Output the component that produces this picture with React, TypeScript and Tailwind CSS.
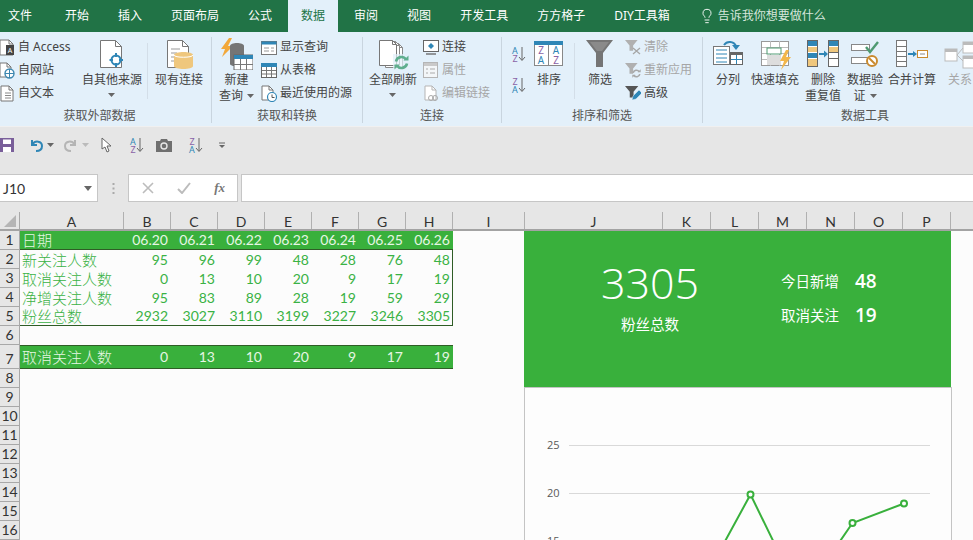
import React from "react";
import { Lightbulb } from "lucide-react";

const Page = ({ x = 1, y = 1, w = 15, h = 18, f = 5, s = "#777" }: any) => (
  <>
    <path d={`M${x} ${y}h${w - f}l${f} ${f}v${h - f}h-${w}z`} fill="#fff" stroke={s} />
    <path d={`M${x + w - f} ${y}v${f}h${f}`} fill="none" stroke={s} />
  </>
);
const Ico = ({ w = 32, h = 32, children, className = "" }: any) => (
  <svg width={w} height={h} viewBox={`0 0 ${w} ${h}`} className={"shrink-0 " + className}>{children}</svg>
);
const Tx = ({ x, y, c, s = 9, children }: any) => (
  <text x={x} y={y} fill={c} fontSize={s} fontFamily="Noto Sans" textAnchor="middle">{children}</text>
);
const Caret = ({ c = "#666" }: any) => (
  <svg width="7" height="4" viewBox="0 0 7 4" className="inline-block"><path d="M0 0h7L3.5 4z" fill={c} /></svg>
);
const Funnel = ({ c, x = 0, y = 0, k = 1 }: any) => (
  <path transform={`translate(${x} ${y}) scale(${k})`} d="M0 0h14L9 6v6H5V6z" fill={c} />
);

const Big = ({ icon, lines, caret, className = "", gray }: any) => (
  <div className={"flex flex-col items-center pt-[1px] whitespace-nowrap " + className}>
    <div className="flex h-[34px] items-start justify-center">{icon}</div>
    <div className={"flex flex-col items-center leading-[16px] " + (gray ? "text-[#a6a6a6]" : "text-[#444444]")}>
      {lines.map((l: string, i: number) => (
        <div key={i} className="flex items-center gap-[4px]">
          {l}
          {caret === "inline" && i === lines.length - 1 && <Caret />}
        </div>
      ))}
      {caret === "below" && <div className="flex h-[13px] items-center"><Caret /></div>}
    </div>
  </div>
);
const Small = ({ icon, label, gray }: any) => (
  <div className={"flex h-[20px] items-center gap-[3px] whitespace-nowrap " + (gray ? "text-[#a6a6a6]" : "text-[#444444]")}>
    <div className="flex w-[16px] justify-center">{icon}</div>
    <span>{label}</span>
  </div>
);
const Group = ({ label, className, labelClass = "", children }: any) => (
  <div className={"flex h-[86px] shrink-0 flex-col border-r border-[#c9d5df] " + className}>
    <div className="flex h-[70px] shrink-0 items-start">{children}</div>
    <div className={"flex h-[18px] shrink-0 items-center justify-center whitespace-nowrap leading-[16px] text-[#555555] " + labelClass}>{label}</div>
  </div>
);
const Sep = ({ className = "" }: any) => <div className={"h-[56px] w-px shrink-0 bg-[#d3dee8] " + className} />;

const SortAZ = () => (
  <Ico w={16} h={16}>
    <Tx x={5} y={7.5} c="#2f86b6">A</Tx><Tx x={5} y={15.5} c="#8a63a6">Z</Tx>
    <path d="M12 1v13M9 11l3 3.5 3-3.5" fill="none" stroke="#666" />
  </Ico>
);
const SortZA = () => (
  <Ico w={16} h={16}>
    <Tx x={5} y={7.5} c="#8a63a6">Z</Tx><Tx x={5} y={15.5} c="#2f86b6">A</Tx>
    <path d="M12 1v13M9 11l3 3.5 3-3.5" fill="none" stroke="#666" />
  </Ico>
);

const RefreshMark = ({ x, y, c = "#5fae8e", k = 1 }: any) => (
  <g transform={`translate(${x} ${y}) scale(${k})`} fill="none" stroke={c} strokeWidth="2.6">
    <path d="M2 6.5A5.5 5.5 0 0 1 12 4.5" />
    <path d="M13 8.5A5.5 5.5 0 0 1 3 10.5" />
    <path d="M9.5 5.5h5v-5z" fill={c} stroke="none" />
    <path d="M5.5 9.5h-5v5z" fill={c} stroke="none" />
  </g>
);

const tabs = ["开始", "插入", "页面布局", "公式"];
const tabs2 = ["审阅", "视图", "开发工具", "方方格子", "DIY工具箱"];

const cols: [string, string][] = [
  ["A", "w-[104px]"], ["B", "w-[47px]"], ["C", "w-[47px]"], ["D", "w-[47px]"], ["E", "w-[47px]"], ["F", "w-[47px]"], ["G", "w-[47px]"], ["H", "w-[47px]"], ["I", "w-[72px]"],
  ["J", "w-[138px]"], ["K", "w-[48px]"], ["L", "w-[48px]"], ["M", "w-[48px]"], ["N", "w-[48px]"], ["O", "w-[48px]"], ["P", "w-[48px]"], ["", "w-[40px]"],
];

const rows: { n: number; label?: string; vals?: (string | number)[]; kind?: string }[] = [
  { n: 1, label: "日期", vals: ["06.20", "06.21", "06.22", "06.23", "06.24", "06.25", "06.26"], kind: "head" },
  { n: 2, label: "新关注人数", vals: [95, 96, 99, 48, 28, 76, 48], kind: "body" },
  { n: 3, label: "取消关注人数", vals: [0, 13, 10, 20, 9, 17, 19], kind: "body" },
  { n: 4, label: "净增关注人数", vals: [95, 83, 89, 28, 19, 59, 29], kind: "body" },
  { n: 5, label: "粉丝总数", vals: [2932, 3027, 3110, 3199, 3227, 3246, 3305], kind: "last" },
  { n: 6 },
  { n: 7, label: "取消关注人数", vals: [0, 13, 10, 20, 9, 17, 19], kind: "band" },
  ...[8, 9, 10, 11, 12, 13, 14, 15, 16].map((n) => ({ n })),
];

const rowClass = (k?: string) => {
  if (k === "head") return "h-[19px] bg-[#39b03c] text-[#e6f6e4] border-b border-[#2f5d26]";
  if (k === "band") return "h-[24px] bg-[#39b03c] text-[#e6f6e4] border-y border-[#2f5d26]";
  if (k === "last") return "h-[19px] text-[#3ab244] border-b border-[#2f5d26]";
  if (k === "body") return "h-[19px] text-[#3ab244]";
  return "h-[19px]";
};

export default function App() {
  return (
    <div className="h-[540px] w-[973px] overflow-hidden bg-[#e6e6e6] font-['Noto_Sans','Noto_Sans_CJK_SC',sans-serif] text-[12px]">
      {/* Tabs */}
      <div className="flex h-[32px] items-center gap-[29px] whitespace-nowrap bg-[#217346] pl-[8px] text-white">
        <span className="mr-[4px]">文件</span>
        {tabs.map((t) => <span key={t}>{t}</span>)}
        <span className="-mx-[13px] flex h-[32px] items-center bg-[#e3f0fa] px-[13px] text-[#217346]">数据</span>
        {tabs2.map((t) => <span key={t}>{t}</span>)}
        <span className="flex items-center gap-[3px] text-[#d6e6dc]">
          <Lightbulb size={16} strokeWidth={1.4} className="text-white" />
          告诉我你想要做什么
        </span>
      </div>

      {/* Ribbon */}
      <div className="flex h-[94px] overflow-hidden bg-[#e3f0fa] pt-[5px] text-[12px]">
        <Group label="获取外部数据" labelClass="pr-[12px]" className="w-[212px]">
          <div className="-ml-px flex w-[81px] shrink-0 flex-col gap-[3px]">
            <Small label="自 Access" icon={<Ico w={16} h={17}><Page x={1} y={1} w={13} h={15} f={4} /><rect x="7" y="6" width="8" height="10" fill="#444" /><Tx x={11} y={14} c="#fff" s={7}>A</Tx></Ico>} />
            <Small label="自网站" icon={<Ico w={16} h={17}><Page x={1} y={1} w={11} h={14} f={4} /><circle cx="10.5" cy="11.5" r="4.5" fill="#fff" stroke="#3d87b0" strokeWidth="1.4" /><path d="M6 11.5h9M10.5 7v9" stroke="#3d87b0" /></Ico>} />
            <Small label="自文本" icon={<Ico w={16} h={17}><Page x={2} y={1} w={12} h={15} f={4} /><path d="M6 8h6M6 10.5h6M6 13h6" stroke="#888" /></Ico>} />
          </div>
          <Big className="w-[64px] shrink-0" lines={["自其他来源"]} caret="below" icon={
            <Ico><Page x={4.5} y={2.5} w={21} h={27} f={6} /><circle cx="20" cy="22" r="4.5" fill="none" stroke="#2f86b6" strokeWidth="2" /><path d="M20 15v4M20 25v4M13.500 22h3.500M23 22h4" stroke="#2f86b6" strokeWidth="2" /></Ico>
          } />
          <Sep className="ml-[3px] mt-[6px]" />
          <Big className="w-[62px] shrink-0" lines={["现有连接"]} icon={
            <Ico><Page x={4.5} y={2.5} w={21} h={27} f={6} /><path d="M8 11h9M8 15h6M8 19h6M8 23h6" stroke="#999" /><path d="M11 17c0-4 19-4 19 0v11c0 4-19 4-19 0z" fill="#efc77d" /><path d="M11 17c0 3 19 3 19 0" fill="none" stroke="#fff" /></Ico>
          } />
        </Group>

        <Group label="获取和转换" className="w-[151px]">
          <Big className="w-[49px] shrink-0" lines={["新建", "查询"]} caret="inline" icon={
            <Ico>
              <path d="M8 0L0 11h4L1 19l11-11H7l4-8z" fill="#f2a83a" />
              <path d="M9 8c0-4 14-4 14 0v18c0 3-14 3-14 0z" fill="#757575" />
              <rect x="13" y="17" width="19" height="15" fill="#fff" stroke="#666" />
              <rect x="13" y="17" width="19" height="4" fill="#2f86b6" />
              <path d="M19.500 21v11M25.500 21v11M13 26.500h19" stroke="#777" />
            </Ico>
          } />
          <div className="flex flex-col gap-[3px]">
            <Small label="显示查询" icon={<Ico w={16} h={15}><rect x=".5" y="1.5" width="15" height="13" fill="#fff" stroke="#777" /><rect x=".5" y="1.5" width="15" height="3" fill="#2f86b6" /><path d="M3 8h5M3 11h5M10 8h3M10 11h3" stroke="#999" /></Ico>} />
            <Small label="从表格" icon={<Ico w={16} h={16}><rect x=".5" y="1.500" width="15" height="14" fill="#fff" stroke="#666" /><rect x="0" y="1" width="16" height="4" fill="#2f86b6" /><path d="M5.500 5v10M10.500 5v10M1 8.500h14M1 12h14" stroke="#777" /></Ico>} />
            <Small label="最近使用的源" icon={<Ico w={16} h={17}><Page x={1} y={1} w={11} h={14} f={4} /><circle cx="11" cy="12" r="4.500" fill="#fff" stroke="#2f86b6" strokeWidth="1.2" /><path d="M11 9.500v3h2.500" fill="none" stroke="#555" /></Ico>} />
          </div>
        </Group>

        <Group label="连接" className="w-[139px]">
          <Big className="w-[60px] shrink-0" lines={["全部刷新"]} caret="below" icon={
            <Ico w={34}>
              <Page x={9.500} y={5.500} w={17} h={24} f={4} s="#888" />
              <Page x={6.500} y={3.500} w={17} h={24} f={4} s="#888" />
              <Page x={3.500} y={2.500} w={17} h={25} f={4} s="#777" />
              <rect x="17" y="16" width="16" height="16" fill="#e3f0fa" opacity=".7" />
              <RefreshMark x={18} y={17} />
            </Ico>
          } />
          <div className="flex flex-col gap-[3px]">
            <Small label="连接" icon={<Ico w={16} h={15}><rect x=".5" y=".5" width="15" height="11" fill="#fff" stroke="#666" /><path d="M8 3l3 3-3 3-3-3z" fill="#2f86b6" /><path d="M3 14h10" stroke="#777" strokeWidth="1.500" /></Ico>} />
            <Small label="属性" gray icon={<Ico w={16} h={16}><rect x=".5" y=".5" width="14" height="15" fill="#f3f6f8" stroke="#b5b5b5" /><rect x="1" y="1" width="13" height="3" fill="#c9c9c9" /><path d="M3 7h2M3 11h2M7 7h5M7 11h5" stroke="#aaa" /></Ico>} />
            <Small label="编辑链接" gray icon={<Ico w={16} h={17}><Page x={2} y={1} w={11} h={14} f={4} s="#b5b5b5" /><circle cx="8" cy="13" r="2.500" fill="none" stroke="#aaa" /><circle cx="12" cy="13" r="2.500" fill="none" stroke="#aaa" /></Ico>} />
          </div>
        </Group>

        <Group label="排序和筛选" className="w-[201px]">
          <div className="flex w-[32px] shrink-0 flex-col items-center gap-[15px] pt-[9px]">
            <SortAZ />
            <SortZA />
          </div>
          <Big className="w-[30px] shrink-0" lines={["排序"]} icon={
            <Ico w={30}>
              <rect x=".5" y="3.500" width="28" height="24" fill="#fff" stroke="#888" />
              <rect x="0" y="3" width="29" height="4" fill="#2f86b6" />
              <path d="M14.500 7v20" stroke="#888" />
              <Tx x={7} y={16} c="#8a63a6" s={10}>Z</Tx><Tx x={7} y={26} c="#2f86b6" s={10}>A</Tx>
              <Tx x={22} y={16} c="#2f86b6" s={10}>A</Tx><Tx x={22} y={26} c="#8a63a6" s={10}>Z</Tx>
            </Ico>
          } />
          <Sep className="ml-[10px] mt-[6px]" />
          <Big className="w-[50px] shrink-0" lines={["筛选"]} icon={
            <Ico><path d="M2 2h27L19 15v14h-7V15z" fill="#757575" /><path d="M6 4h19L18 13h-5z" fill="#8a8a8a" /></Ico>
          } />
          <div className="flex flex-col gap-[3px]">
            <Small label="清除" gray icon={<Ico w={16} h={16}><Funnel c="#b0b0b0" y={1} k={.9} /><path d="M8 9l7 6M15 9l-7 6" stroke="#a6a6a6" strokeWidth="1.300" /></Ico>} />
            <Small label="重新应用" gray icon={<Ico w={16} h={16}><Funnel c="#b0b0b0" y={1} k={.9} /><RefreshMark x={7} y={7} c="#a8a8a8" k={.6} /></Ico>} />
            <Small label="高级" icon={<Ico w={16} h={16}><Funnel c="#555" y={1} k={.95} /><path d="M7 15l1-4 6-6 3 3-6 6z" fill="#2f86b6" stroke="#e3f0fa" strokeWidth=".5" /></Ico>} />
          </div>
        </Group>

        <div className="flex h-[86px] w-[324px] shrink-0 flex-col">
          <div className="flex h-[70px] shrink-0 items-start">
            <Big className="w-[50px] shrink-0" lines={["分列"]} icon={
              <Ico>
                <rect x="1.500" y="8.500" width="16" height="18" fill="#fff" stroke="#777" />
                <path d="M4 12h11M4 16h11M4 20h11M4 24h11" stroke="#2f86b6" />
                <rect x="18.500" y="14.500" width="12" height="12" fill="#fff" stroke="#666" />
                <rect x="18" y="14" width="13" height="3" fill="#666" />
                <path d="M24.500 17v9M19 21.500h11" stroke="#2f86b6" />
                <path d="M12 7A7 7 0 0 1 24 8" fill="none" stroke="#2f86b6" strokeWidth="2" />
                <path d="M20 7h8l-4 5z" fill="#2f86b6" />
              </Ico>
            } />
            <Big className="w-[44px] shrink-0" lines={["快速填充"]} icon={
              <Ico>
                <rect x="2.500" y="3.500" width="27" height="24" fill="#fff" stroke="#999" />
                <path d="M11.500 3v25M20.500 3v25M3 9.500h26M3 15.500h26M3 21.500h26" stroke="#bbb" />
                <rect x="8" y="10" width="14" height="6" fill="#fff" stroke="#4f9a72" />
                <rect x="8" y="17" width="14" height="10" fill="#ddd" />
                <path d="M27 12l-6 11h4l-3 9 10-13h-5l3-7z" fill="#f2b64a" />
              </Ico>
            } />
            <Big className="w-[52px] shrink-0" lines={["删除", "重复值"]} icon={
              <Ico>
                <rect x=".5" y="2.500" width="10" height="26" fill="#fff" stroke="#666" />
                <rect x="1" y="3" width="9" height="5" fill="#2f86b6" /><rect x="1" y="9" width="9" height="5" fill="#efc77d" /><rect x="1" y="15" width="9" height="5" fill="#2f86b6" /><rect x="1" y="21" width="9" height="7" fill="#efc77d" />
                <path d="M12 16h5" stroke="#2f86b6" strokeWidth="2" /><path d="M17 12.500l4 3.500-4 3.500z" fill="#2f86b6" />
                <rect x="21.500" y="2.500" width="10" height="26" fill="#fff" stroke="#666" />
                <rect x="22" y="3" width="9" height="5" fill="#2f86b6" /><rect x="22" y="9" width="9" height="5" fill="#efc77d" />
                <path d="M22 20.500h9M22 14.500h9" stroke="#666" />
              </Ico>
            } />
            <Big className="w-[32px] shrink-0" lines={["数据验", "证"]} caret="inline" icon={
              <Ico>
                <rect x="2.500" y="6.500" width="18" height="6" fill="#fff" stroke="#888" />
                <rect x="2.500" y="19.500" width="18" height="6" fill="#fff" stroke="#888" />
                <path d="M17 9l4 5 8-10" fill="none" stroke="#4f9a72" strokeWidth="2.400" />
                <circle cx="23" cy="23" r="5" fill="#fff" stroke="#c98a2e" strokeWidth="2" />
                <path d="M20 20l6 6" stroke="#c98a2e" strokeWidth="2" />
              </Ico>
            } />
            <Big className="w-[62px] shrink-0" lines={["合并计算"]} icon={
              <Ico>
                <rect x=".5" y="2.500" width="10" height="26" fill="#fff" stroke="#777" />
                <path d="M1 8.500h9M1 13.500h9M1 18.500h9M1 23.500h9" stroke="#777" />
                <path d="M12 16h5" stroke="#2f86b6" strokeWidth="2" /><path d="M17 13l4 3-4 3z" fill="#2f86b6" />
                <rect x="21.500" y="12.500" width="10" height="7" fill="#fff" stroke="#c98a2e" />
                <path d="M24 16h5" stroke="#888" />
              </Ico>
            } />
            <Big className="w-[34px] shrink-0" gray lines={["关系"]} icon={
              <Ico>
                <rect x="1" y="11" width="12" height="12" fill="#fff" stroke="#bbb" /><rect x="1" y="11" width="12" height="3" fill="#bbb" />
                <rect x="19" y="4" width="13" height="11" fill="#fff" stroke="#bbb" /><rect x="19" y="4" width="13" height="3" fill="#bbb" />
                <rect x="19" y="18" width="13" height="12" fill="#fff" stroke="#bbb" /><rect x="19" y="18" width="13" height="3" fill="#bbb" />
                <path d="M13 17l6-7M13 17l6 6" stroke="#bbb" />
              </Ico>
            } />
          </div>
          <div className="flex h-[18px] shrink-0 items-center justify-center whitespace-nowrap leading-[16px] text-[#555555]">数据工具</div>
        </div>
      </div>

      {/* Quick access */}
      <div className="flex h-[37px] items-center border-t border-[#f0f0f0]">
        <Ico w={14} h={14}><path d="M0 0h14v14H0z" fill="#7a5f9a" /><rect x="3" y="1.500" width="8" height="4.500" fill="#fff" /><rect x="3" y="9" width="8" height="5" fill="#fff" /></Ico>
        <Ico w={16} h={16} className="ml-[14px]"><path d="M4 3v5h5" fill="none" stroke="#2f86b6" strokeWidth="2" /><path d="M4.500 7.500C7 3 14 4 14 9c0 3-2 5-6 5" fill="none" stroke="#2f86b6" strokeWidth="2" /></Ico>
        <span className="ml-[3px] flex"><Caret /></span>
        <Ico w={16} h={16} className="ml-[9px]"><path d="M12 3v5H7" fill="none" stroke="#b5b5b5" strokeWidth="2" /><path d="M11.500 7.500C9 3 2 4 2 9c0 3 2 5 6 5" fill="none" stroke="#b5b5b5" strokeWidth="2" /></Ico>
        <span className="ml-[3px] flex"><Caret c="#bbb" /></span>
        <Ico w={11} h={16} className="ml-[12px]"><path d="M1 1v11l3-2 2 5 2-1-2-5h4z" fill="#fff" stroke="#666" /></Ico>
        <span className="ml-[16px] flex"><SortAZ /></span>
        <Ico w={16} h={13} className="ml-[12px]"><path d="M0 2h4l1-2h6l1 2h4v11H0z" fill="#6f6f6f" /><circle cx="8" cy="7" r="3" fill="#6f6f6f" stroke="#e6e6e6" strokeWidth="1.400" /></Ico>
        <span className="ml-[15px] flex"><SortZA /></span>
        <Ico w={6} h={7} className="ml-[16px]"><path d="M0 1h6" stroke="#666" /><path d="M0 3h6l-3 3z" fill="#666" /></Ico>
      </div>
      <div className="h-[11px]" />

      {/* Formula bar */}
      <div className="flex h-[28px] items-stretch">
        <div className="flex w-[98px] items-center justify-between border border-l-0 border-[#c6c6c6] bg-white pl-[3px] pr-[5px] font-['Lato','Noto_Sans',sans-serif] text-[14px] text-[#333333]">
          <span>J10</span>
          <svg width="8" height="5" viewBox="0 0 8 5"><path d="M0 0h8L4 5z" fill="#666" /></svg>
        </div>
        <div className="flex w-[30px] items-center justify-center">
          <Ico w={3} h={11}><path d="M1.500 0v2M1.500 4.500v2M1.500 9v2" stroke="#aaa" strokeWidth="2" /></Ico>
        </div>
        <div className="flex w-[110px] items-center justify-between border border-[#c6c6c6] bg-white pl-[13px] pr-[12px]">
          <Ico w={12} h={12}><path d="M1 1l10 10M11 1L1 11" stroke="#bcbcbc" strokeWidth="1.600" /></Ico>
          <Ico w={14} h={12}><path d="M1 7l4 4 8-10" fill="none" stroke="#bcbcbc" strokeWidth="2" /></Ico>
          <span className="font-['Liberation_Serif',serif] text-[13px] font-bold italic text-[#777777]">fx</span>
        </div>
        <div className="ml-[3px] flex-1 border border-r-0 border-[#c6c6c6] bg-white" />
      </div>
      <div className="h-[10px]" />

      {/* Column headers */}
      <div className="flex h-[19px] border-b-2 border-[#a3a3a3] font-['Lato','Noto_Sans',sans-serif] text-[14px] leading-[19px] text-[#333333]">
        <div className="flex w-[20px] shrink-0 items-end justify-end border-r border-[#a8a8a8] pb-[2px] pr-[3px]">
          <svg width="12" height="12" viewBox="0 0 12 12"><path d="M12 0v12H0z" fill="#b5b5b5" /></svg>
        </div>
        {cols.map(([c, w], i) => (
          <div key={i} className={"shrink-0 border-r border-[#b0b0b0] text-center " + w}>{c}</div>
        ))}
      </div>

      {/* Sheet */}
      <div className="flex h-[309px] bg-[#fcfcfc]">
        <div className="w-[524px] shrink-0">
          {rows.map((r) => (
            <div key={r.n} className="flex">
              <div className={"flex w-[20px] shrink-0 items-end justify-center overflow-hidden border-r border-b border-[#a8a8a8] bg-[#e6e6e6] font-['Lato','Noto_Sans',sans-serif] text-[14px] leading-[19px] text-[#333333] " + (r.n === 7 ? "h-[24px]" : "h-[19px]")}>{r.n}</div>
              <div className={"flex w-[433px] shrink-0 items-center text-[15px] " + rowClass(r.kind) + (r.kind === "body" || r.kind === "last" ? " border-r border-r-[#2f5d26]" : "")}>
                {r.label && <div className="w-[104px] shrink-0 overflow-hidden whitespace-nowrap pl-[2px] font-light leading-[18px]">{r.label}</div>}
                {r.vals?.map((v, i) => (
                  <div key={i} className="w-[47px] shrink-0 pr-[3px] text-right font-['Lato','Noto_Sans',sans-serif] text-[14px] font-normal leading-[18px]">{v}</div>
                ))}
              </div>
            </div>
          ))}
        </div>

        <div className="flex w-[428px] shrink-0 flex-col">
          <div className="flex h-[157px] w-[427px] bg-[#39b03c] text-white">
            <div className="flex w-[252px] shrink-0 flex-col items-center pt-[22px]">
              <div className="font-['Open_Sans',sans-serif] text-[43px] font-light leading-[60px]">3305</div>
              <div className="mt-[1px] text-[14.5px] leading-[20px]">粉丝总数</div>
            </div>
            <div className="flex flex-col gap-[12px] pl-[5px] pt-[40px]">
              <div className="flex h-[22px] items-center gap-[16px]">
                <span className="text-[14.5px]">今日新增</span>
                <span className="-mt-[2px] font-['Open_Sans',sans-serif] text-[19px] font-semibold">48</span>
              </div>
              <div className="flex h-[22px] items-center gap-[16px]">
                <span className="text-[14.5px]">取消关注</span>
                <span className="-mt-[2px] font-['Open_Sans',sans-serif] text-[19px] font-semibold">19</span>
              </div>
            </div>
          </div>
          <div className="flex-1 border-x border-t border-[#c4c4c4] bg-[#fdfdfd]">
            <svg width="426" height="152" viewBox="525 389 426 152" className="block">
              <path d="M569 446.500h361M569 494.500h361" stroke="#d9d9d9" />
              <g fill="#595959" fontSize="11" fontFamily="Open Sans">
                <text x="547" y="450">25</text>
                <text x="547" y="498">20</text>
                <text x="547" y="546">15</text>
              </g>
              <path d="M699 590L750.500 495.500L801 599L852.500 524L904 504.500" fill="none" stroke="#39b03c" strokeWidth="2" />
              {[[750.5, 495.5], [852.5, 524], [904, 504.5]].map(([x, y]) => (
                <circle key={x} cx={x} cy={y} r="3" fill="#fdfdfd" stroke="#39b03c" strokeWidth="2" />
              ))}
            </svg>
          </div>
        </div>
      </div>
    </div>
  );
}
